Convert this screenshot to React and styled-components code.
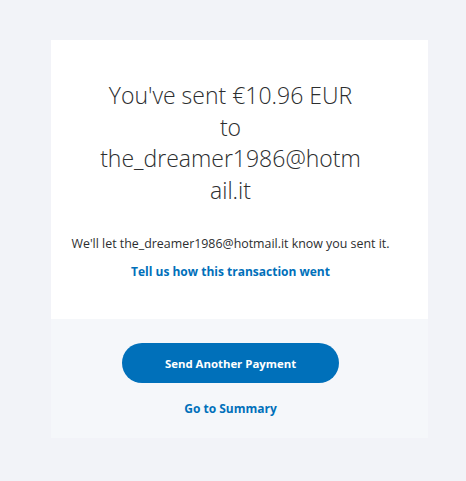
import React from "react";
import styled, { createGlobalStyle } from "styled-components";

const Global = createGlobalStyle`
  html, body { margin: 0; padding: 0; background: #f2f3f8; }
  body { font-family: "Open Sans", "Liberation Sans", sans-serif; color: #2c2e2f; }
`;

const Page = styled.div`
  padding: 40px 38px 0 51px;
`;

const Card = styled.div`
  width: 377px;
  background: #ffffff;
  display: flex;
  flex-direction: column;
`;

const Top = styled.section`
  display: flex;
  flex-direction: column;
  align-items: center;
  padding: 40px 18px 37px 0;
`;

const Headline = styled.h1`
  margin: 0;
  width: 265px;
  font-family: "Open Sans", sans-serif;
  font-weight: 300;
  font-size: 23px;
  line-height: 31.5px;
  text-align: center;
  color: #2c2e2f;
  overflow-wrap: anywhere;
`;

const Note = styled.p`
  margin: 28px 0 0;
  font-size: 12.4px;
  line-height: 20px;
  color: #2c2e2f;
  text-align: center;
  white-space: nowrap;
`;

const TextLink = styled.a`
  display: block;
  margin-top: ${(p) => p.$gap}px;
  font-size: ${(p) => p.$size}px;
  font-weight: 700;
  line-height: 20px;
  color: #0070ba;
  text-decoration: none;
  text-align: center;
`;

const Bottom = styled.section`
  background: #f5f7fa;
  display: flex;
  flex-direction: column;
  align-items: center;
  padding: 24px 18px 19px 0;
`;

const PrimaryButton = styled.button`
  width: 217px;
  height: 40px;
  border: none;
  border-radius: 20px;
  background: #0070ba;
  color: #ffffff;
  font-family: "Open Sans", sans-serif;
  font-weight: 700;
  font-size: 11.4px;
`;

export default function App() {
  return (
    <>
      <Global />
      <Page>
        <Card>
          <Top>
            <Headline>You've sent €10.96 EUR to the_dreamer1986@hotmail.it</Headline>
            <Note>We'll let the_dreamer1986@hotmail.it know you sent it.</Note>
            <TextLink $gap={8} $size={12}>Tell us how this transaction went</TextLink>
          </Top>
          <Bottom>
            <PrimaryButton>Send Another Payment</PrimaryButton>
            <TextLink $gap={16} $size={12}>Go to Summary</TextLink>
          </Bottom>
        </Card>
      </Page>
    </>
  );
}
